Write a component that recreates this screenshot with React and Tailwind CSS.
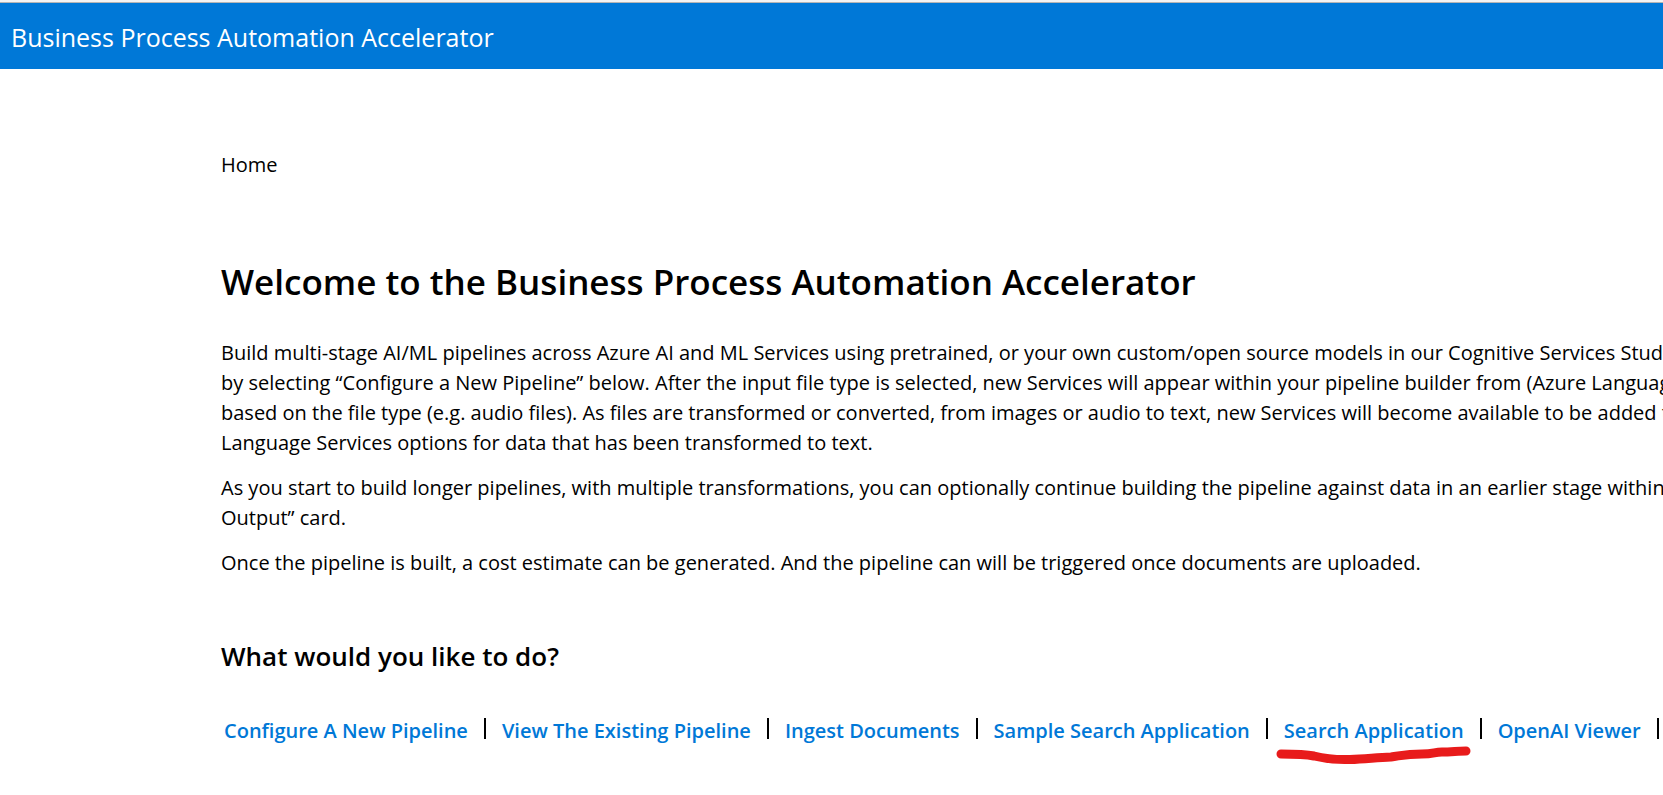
const paragraphs = [
  [
    'Build multi-stage AI/ML pipelines across Azure AI and ML Services using pretrained, or your own custom/open source models in our Cognitive Services Stud',
    'by selecting “Configure a New Pipeline” below. After the input file type is selected, new Services will appear within your pipeline builder from (Azure Languag',
    'based on the file type (e.g. audio files). As files are transformed or converted, from images or audio to text, new Services will become available to be added t',
    'Language Services options for data that has been transformed to text.',
  ],
  [
    'As you start to build longer pipelines, with multiple transformations, you can optionally continue building the pipeline against data in an earlier stage within',
    'Output” card.',
  ],
  [
    'Once the pipeline is built, a cost estimate can be generated. And the pipeline can will be triggered once documents are uploaded.',
  ],
];

const links = [
  { label: 'Configure A New Pipeline' },
  { label: 'View The Existing Pipeline' },
  { label: 'Ingest Documents' },
  { label: 'Sample Search Application' },
  { label: 'Search Application', marked: true },
  { label: 'OpenAI Viewer' },
];

function MarkerStroke() {
  return (
    <svg
      className="pointer-events-none absolute -left-2 top-[29px] h-[20px] w-[196px]"
      viewBox="0 0 196 20"
      fill="none"
      aria-hidden="true"
    >
      <path
        d="M5 9C18 9 28 9 38 11C50 14 60 15 74 14.500C90 14 100 12.500 115 12C126 10.500 130 9 146 9C158 9 158 7 166 7C175 7 182 6 190 6"
        stroke="#e81b1b"
        strokeWidth="9"
        strokeLinecap="round"
        strokeLinejoin="round"
      />
    </svg>
  );
}

export default function App() {
  return (
    <div className="min-h-screen overflow-hidden bg-white font-['Open_Sans',sans-serif] text-black">
      <div className="h-[3px] border-b border-[#b5b5b5] bg-[#f3f3f3]" />
      <header className="flex h-[66px] items-center bg-[#0078d7] px-[11px] pt-[2px]">
        <span className="text-[25px] leading-[36px] text-white">Business Process Automation Accelerator</span>
      </header>

      <main className="pl-[221px] pt-[81px]">
        <nav aria-label="Breadcrumb" className="text-[20px] leading-[30px]">Home</nav>

        <h1 className="mt-[77px] text-[35px] font-semibold leading-[50px]">
          Welcome to the Business Process Automation Accelerator
        </h1>

        <div className="mt-[31px] flex flex-col gap-[15px] whitespace-nowrap text-[20px] leading-[30px]">
          {paragraphs.map((lines) => (
            <p key={lines[0]}>
              {lines.map((line) => (
                <span key={line} className="block">{line}</span>
              ))}
            </p>
          ))}
        </div>

        <h2 className="mt-[58px] text-[26px] font-semibold leading-[40px]">What would you like to do?</h2>

        <ul className="mt-[40px] flex whitespace-nowrap pl-[3px] text-[20px] font-semibold leading-[30px]">
          {links.map(({ label, marked }) => (
            <li key={label} className="flex">
              <span className="relative">
                <a href="#" className="text-[#0078d7]">{label}</a>
                {marked && <MarkerStroke />}
              </span>
              <span className="mx-4 mt-[2px] h-[21px] w-[2px] bg-black" />
            </li>
          ))}
        </ul>
      </main>
    </div>
  );
}
